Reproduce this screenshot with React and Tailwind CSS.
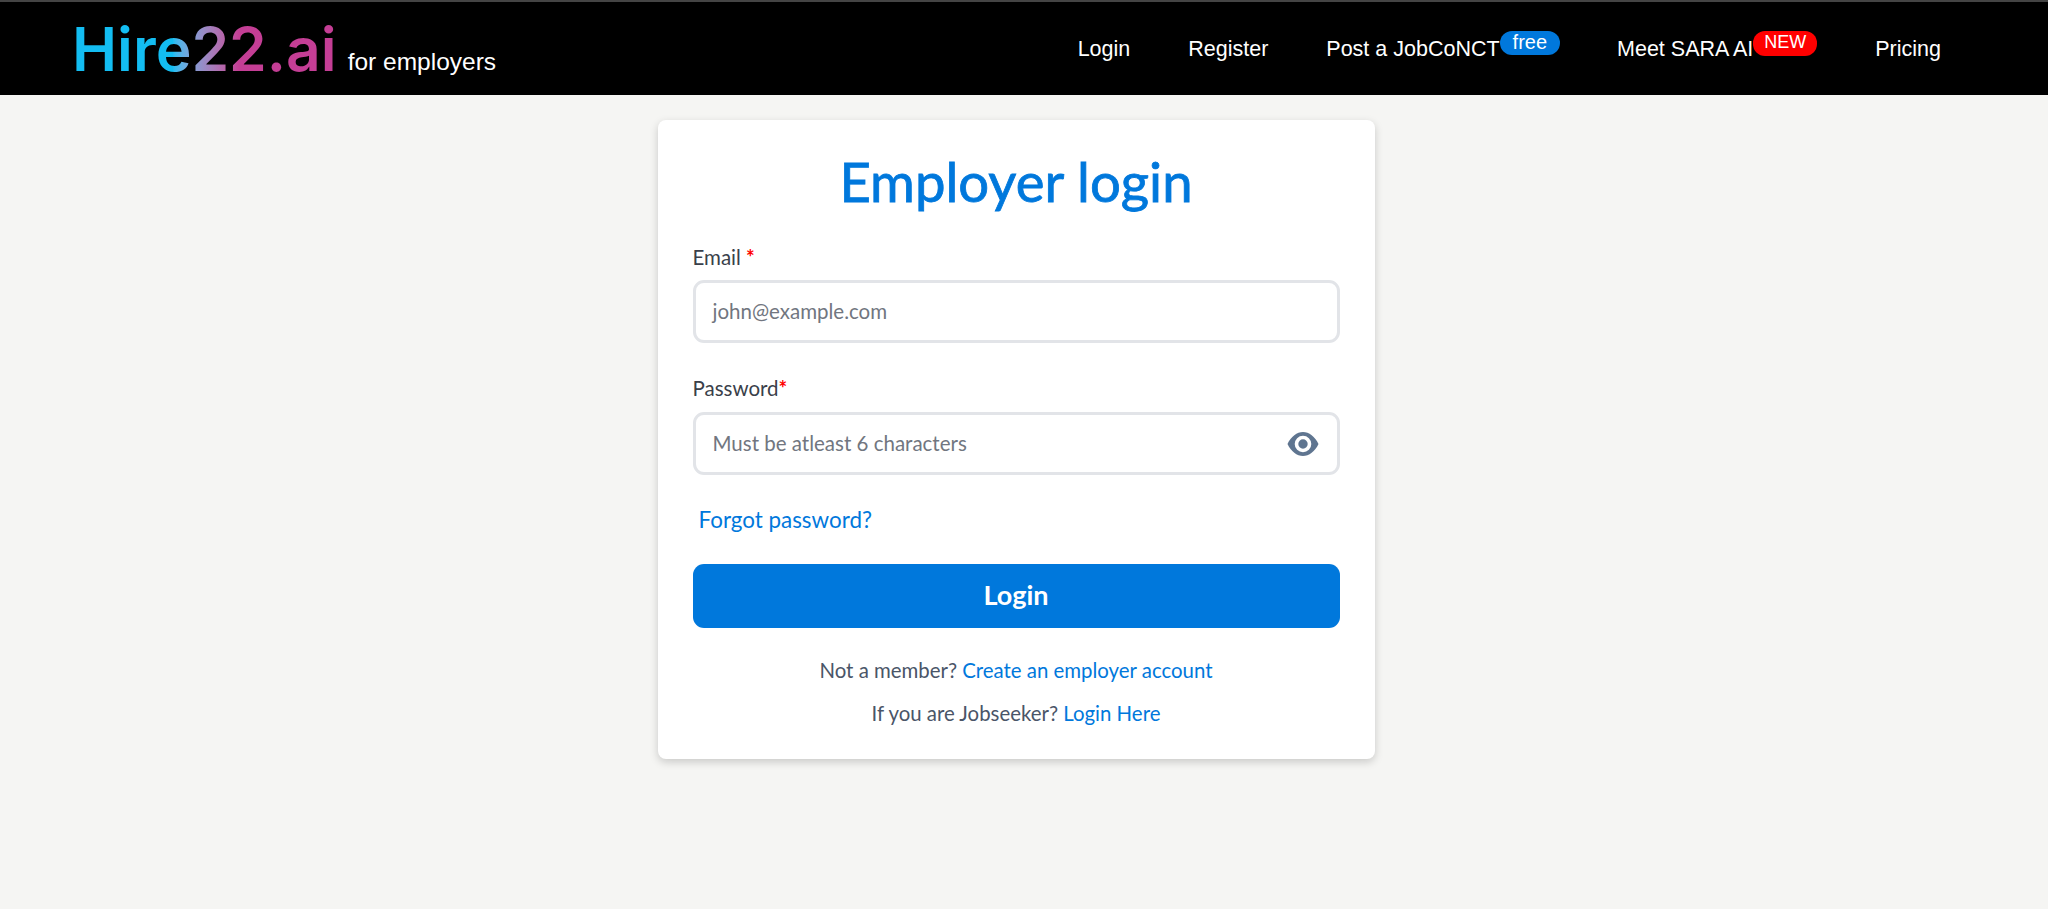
import React from 'react'

function Field({ label, star, placeholder, gap, children }) {
  return (
    <div>
      <label className={'block text-[20.5px] leading-[24px] text-[#3a3f4a] ' + gap}>
        {label}<span className="font-bold text-[#ff0000]">{star}</span>
      </label>
      <div className="h-[63px] rounded-[11px] border-[3px] border-[#e2e4e8] bg-white flex items-center justify-between pl-[17px] pr-[17px]">
        <span className="text-[20.5px] text-[#717680]">{placeholder}</span>
        {children}
      </div>
    </div>
  )
}

export default function App() {
  return (
    <div className="min-h-[909px] bg-[#f5f5f3] font-['Lato',sans-serif]">
      <header className="h-[95px] bg-black border-t-2 border-[#444444] flex items-center justify-between pl-[72px] pr-[107px] font-['Liberation_Sans',sans-serif] text-white">
        <div className="flex items-end">
          <span className="font-['Inter',sans-serif] text-[60.5px] leading-[70px] font-semibold bg-gradient-to-r from-[#13bdf2] from-[38%] via-[#c43e95] via-[63%] to-[#c43e95] bg-clip-text text-transparent">Hire22.ai</span>
          <span className="ml-[11px] mb-[6px] text-[24.5px] leading-[32px]">for employers</span>
        </div>
        <nav className="flex items-center text-[21.5px] mt-[2px]">
          <a className="mr-[58px]">Login</a>
          <a className="mr-[58px]">Register</a>
          <a className="flex items-start mr-[57px]">
            Post a JobCoNCT
            <span className="-mt-[2px] h-[24px] px-[13px] rounded-[12px] bg-[#0078dc] text-[20px] leading-[23px]">free</span>
          </a>
          <a className="flex items-start mr-[58px]">
            Meet SARA AI
            <span className="-mt-[2px] h-[25px] px-[11px] rounded-[12px] bg-[#ff0000] text-[18px] leading-[23px]">NEW</span>
          </a>
          <a>Pricing</a>
        </nav>
      </header>

      <main className="flex justify-center pt-[25px] pr-[16px]">
        <div className="w-[717px] h-[639px] bg-white rounded-[8px] shadow-[0_3px_8px_rgba(0,0,0,0.18)] px-[35px] pt-[30px]">
          <h1 className="text-center text-[54.5px] leading-[63px] [-webkit-text-stroke:0.8px_#0078dc] text-[#0078dc]">Employer login</h1>
          <div className="mt-[32px]">
            <Field label="Email " star="*" placeholder="john@example.com" gap="mb-[11px]" />
          </div>
          <div className="mt-[33px]">
            <Field label="Password" star="*" placeholder="Must be atleast 6 characters" gap="mb-[12px]">
              <svg viewBox="0 0 32 24" className="w-[32px] h-[24px] mr-[1px] text-[#5f7590]" fill="currentColor" fillRule="evenodd">
                <path d="M0.5 12C4 4.500 10 0 16 0s12 4.500 15.500 12C28 19.500 22 24 16 24S4 19.500 0.500 12zM16 3.700a8.300 8.300 0 1 0 0 16.600a8.300 8.300 0 1 0 0-16.600zM16 7.300a4.700 4.700 0 1 1 0 9.400a4.700 4.700 0 1 1 0-9.400z" />
              </svg>
            </Field>
          </div>
          <a className="block mt-[31px] ml-[6px] text-[22.4px] leading-[28px] text-[#0078dc]">Forgot password?</a>
          <button className="mt-[30px] w-full h-[64px] rounded-[11px] bg-[#0078dc] text-white text-[27px] font-bold pb-[2px]">Login</button>
          <p className="mt-[29px] text-center text-[20.4px] leading-[26px] text-[#4a5568]">
            Not a member? <a className="text-[#0078dc]">Create an employer account</a>
          </p>
          <p className="mt-[17px] text-center text-[20.4px] leading-[26px] text-[#4a5568]">
            If you are Jobseeker? <a className="text-[#0078dc]">Login Here</a>
          </p>
        </div>
      </main>
    </div>
  )
}
